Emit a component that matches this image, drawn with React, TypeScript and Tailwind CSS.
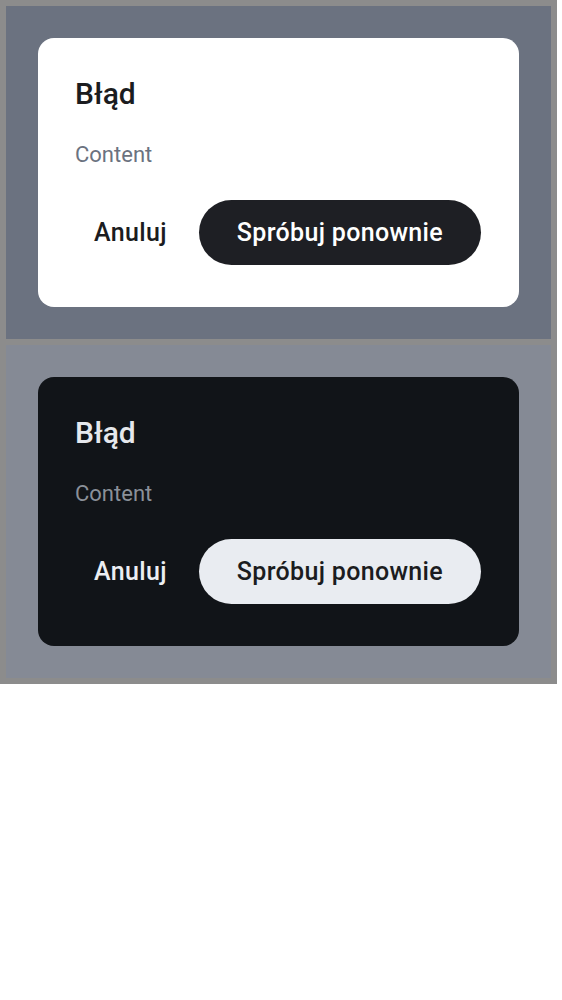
import React from "react";

function Dialog({ dark }: { dark: boolean }) {
  return (
    <div
      className={
        "w-full rounded-2xl pt-[38px] pl-[37px] pr-[38px] pb-[42px] " +
        (dark ? "bg-[#111418]" : "bg-white")
      }
    >
      <div
        className={
          "text-[30px] leading-[36px] font-medium " +
          (dark ? "text-[#e6e8ec]" : "text-[#1b1c20]")
        }
      >
        Błąd
      </div>
      <div
        className={
          "mt-[28px] text-[22px] leading-[30px] " +
          (dark ? "text-[#8a9099]" : "text-[#6b7280]")
        }
      >
        Content
      </div>
      <div className="mt-[30px] flex justify-end gap-[13px]">
        <button
          className={
            "h-[65px] px-[19px] rounded-full text-[25px] font-medium tracking-[0.33px] " +
            (dark ? "text-[#eceef2]" : "text-[#1b1c20]")
          }
        >
          Anuluj
        </button>
        <button
          className={
            "h-[65px] px-[38px] rounded-full text-[25px] font-medium tracking-[0.33px] " +
            (dark ? "bg-[#e9ecf1] text-[#1b1c20]" : "bg-[#1e1f24] text-white")
          }
        >
          Spróbuj ponownie
        </button>
      </div>
    </div>
  );
}

export default function App() {
  return (
    <div className="bg-white min-h-[1000px]" style={{ fontFamily: "Roboto, 'Noto Sans', sans-serif" }}>
      <div className="w-[557px] bg-[#8c8c8c] p-[6px] flex flex-col gap-[6px]">
        <section className="bg-[#6b7280] p-[32px]">
          <Dialog dark={false} />
        </section>
        <section className="bg-[#858a95] p-[32px]">
          <Dialog dark={true} />
        </section>
      </div>
    </div>
  );
}
